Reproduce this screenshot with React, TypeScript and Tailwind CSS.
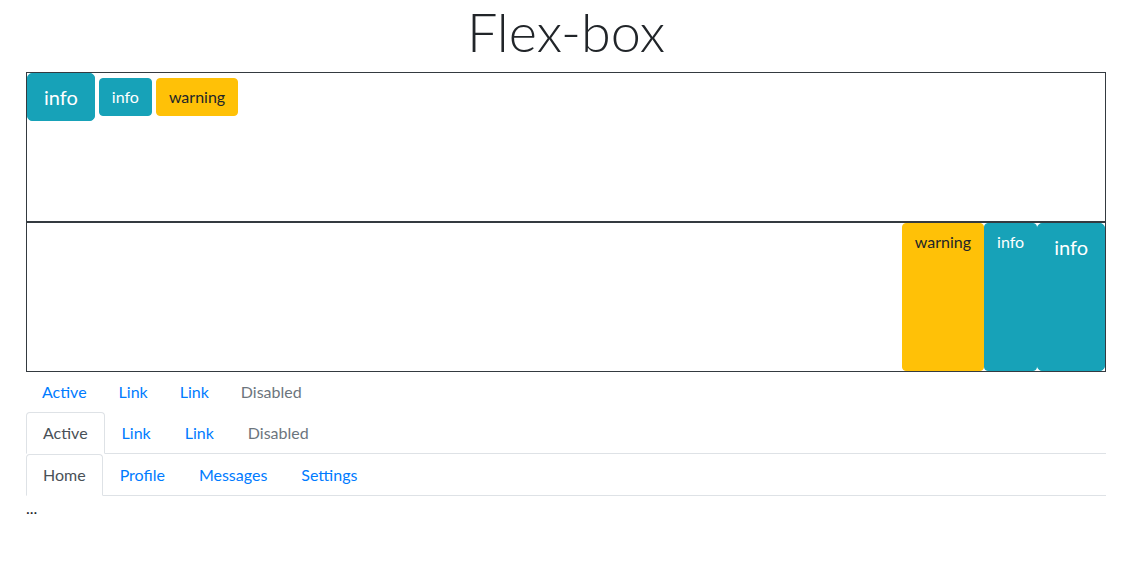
const font = { fontFamily: "Lato, 'Noto Sans', sans-serif" };

function Btn({
  kind,
  size,
  children,
}: {
  kind: "info" | "warning";
  size?: "lg";
  children: React.ReactNode;
}) {
  const color =
    kind === "info"
      ? "bg-[#17a2b8] border-[#17a2b8] text-white"
      : "bg-[#ffc107] border-[#ffc107] text-[#212529]";
  const sz =
    size === "lg"
      ? "px-4 py-2 text-[20px] leading-[30px] rounded-[5px]"
      : "px-3 py-[6px] text-[16px] leading-6 rounded-[4px]";
  return <div className={`border ${color} ${sz} text-center select-none`}>{children}</div>;
}

function NavPlain() {
  return (
    <ul className="flex text-[16px] leading-6">
      <li><a className="block px-4 py-2 text-[#007bff]">Active</a></li>
      <li><a className="block px-4 py-2 text-[#007bff]">Link</a></li>
      <li><a className="block px-4 py-2 text-[#007bff]">Link</a></li>
      <li><a className="block px-4 py-2 text-[#6c757d]">Disabled</a></li>
    </ul>
  );
}

function NavTabs({ items }: { items: string[] }) {
  return (
    <ul className="flex border-b border-[#dee2e6] text-[16px] leading-6">
      {items.map((t, i) => (
        <li key={i} className="-mb-px">
          <a
            className={
              i === 0
                ? "block px-4 py-2 border border-[#dee2e6] border-b-white rounded-t-[4px] bg-white text-[#495057]"
                : t === "Disabled"
                ? "block px-4 py-2 border border-transparent text-[#6c757d]"
                : "block px-4 py-2 border border-transparent text-[#007bff]"
            }
          >
            {t}
          </a>
        </li>
      ))}
    </ul>
  );
}

export default function App() {
  return (
    <div className="bg-white min-h-[575px] text-[#212529]" style={font}>
      <div className="w-[1080px] ml-[26px]">
        <h1 className="text-center text-[54px] font-light leading-[64px] mb-2 text-[#212529]">
          Flex-box
        </h1>

        <div className="flex flex-wrap items-center content-start gap-x-1 h-[150px] border border-[#343a40]">
          <Btn kind="info" size="lg">info</Btn>
          <Btn kind="info">info</Btn>
          <Btn kind="warning">warning</Btn>
        </div>

        <div className="flex flex-row-reverse items-stretch h-[150px] border border-[#343a40]">
          <Btn kind="info" size="lg">info</Btn>
          <Btn kind="info">info</Btn>
          <Btn kind="warning">warning</Btn>
        </div>

        <NavPlain />
        <NavTabs items={["Active", "Link", "Link", "Disabled"]} />
        <NavTabs items={["Home", "Profile", "Messages", "Settings"]} />
        <div className="text-[16px] leading-6">...</div>
      </div>
    </div>
  );
}
